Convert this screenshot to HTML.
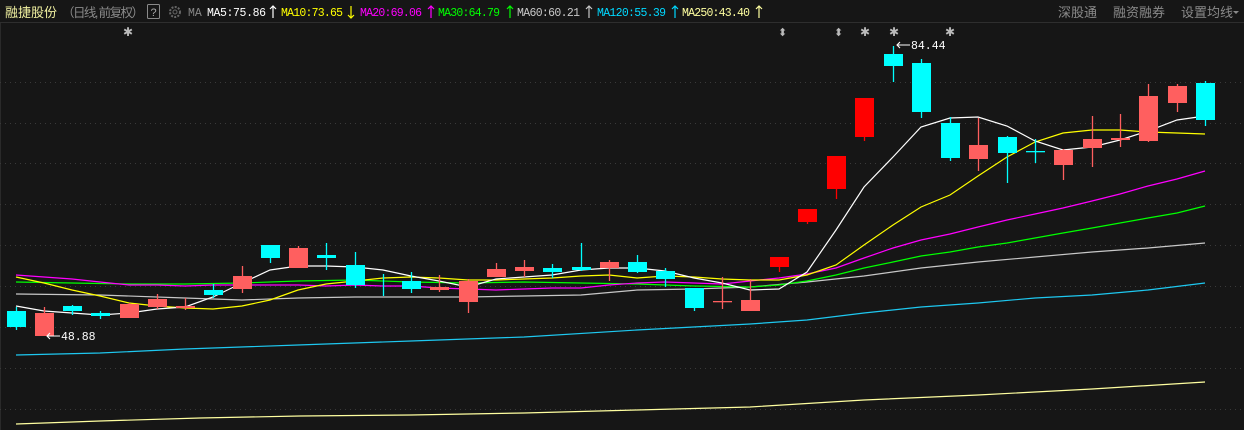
<!DOCTYPE html>
<html><head><meta charset="utf-8"><style>
html,body{margin:0;padding:0;background:#161616;width:1244px;height:430px;overflow:hidden}
svg{display:block}
text{font-family:"Liberation Sans","Noto Sans CJK SC",sans-serif}
.m{font-family:"Liberation Mono","Noto Sans CJK SC",monospace;font-size:11.5px}
</style></head><body>
<svg width="1244" height="430" viewBox="0 0 1244 430" xmlns="http://www.w3.org/2000/svg">
<rect width="1244" height="430" fill="#161616"/>
<line x1="0" y1="22.5" x2="1244" y2="22.5" stroke="#2e2e2e"/>
<line x1="0.5" y1="23" x2="0.5" y2="430" stroke="#2a2a2a"/>
<g stroke="#3a3a3a" stroke-dasharray="1 4">
<line x1="0" y1="82.5" x2="1244" y2="82.5"/><line x1="0" y1="123.5" x2="1244" y2="123.5"/>
<line x1="0" y1="163.5" x2="1244" y2="163.5"/><line x1="0" y1="204.5" x2="1244" y2="204.5"/>
<line x1="0" y1="245.5" x2="1244" y2="245.5"/><line x1="0" y1="286.5" x2="1244" y2="286.5"/>
<line x1="0" y1="327.5" x2="1244" y2="327.5"/><line x1="0" y1="368.5" x2="1244" y2="368.5"/>
<line x1="0" y1="409.5" x2="1244" y2="409.5"/>
</g>
<text x="5" y="17" font-size="13" fill="#f0f0a0" textLength="52">融捷股份</text>
<text x="62" y="17" font-size="12.5" fill="#8a8a8a" textLength="82">（日线, 前复权）</text>
<rect x="147.5" y="4.5" width="12" height="14" fill="none" stroke="#8a8a8a" rx="1"/>
<text x="150.5" y="16" font-size="11" fill="#aaa">?</text>
<circle cx="175" cy="12" r="5" fill="none" stroke="#666" stroke-width="2" stroke-dasharray="2 1.3"/>
<circle cx="175" cy="12" r="2" fill="none" stroke="#666"/>
<text x="188" y="16" class="m" fill="#888">MA</text>
<g class="m">
<text x="207" y="16" class="m" fill="#ffffff" textLength="59">MA5:75.86</text>
<text x="281" y="16" class="m" fill="#ffff00" textLength="62">MA10:73.65</text>
<text x="360" y="16" class="m" fill="#ff00ff" textLength="62">MA20:69.06</text>
<text x="438" y="16" class="m" fill="#00ff00" textLength="62">MA30:64.79</text>
<text x="517" y="16" class="m" fill="#c8c8c8" textLength="63">MA60:60.21</text>
<text x="597" y="16" class="m" fill="#00d8ff" textLength="69">MA120:55.39</text>
<text x="682" y="16" class="m" fill="#ffffa0" textLength="68">MA250:43.40</text>
</g>
<g fill="none" stroke-width="1.2">
<path d="M273 18V6M270 9L273 6L276 9" stroke="#fff"/>
<path d="M351 6V18M348 15L351 18L354 15" stroke="#ffff00"/>
<path d="M431 18V6M428 9L431 6L434 9" stroke="#ff00ff"/>
<path d="M510 18V6M507 9L510 6L513 9" stroke="#00ff00"/>
<path d="M589 18V6M586 9L589 6L592 9" stroke="#c8c8c8"/>
<path d="M675 18V6M672 9L675 6L678 9" stroke="#00d8ff"/>
<path d="M759 18V6M756 9L759 6L762 9" stroke="#ffffa0"/>
</g>
<text x="1058" y="17" font-size="13" fill="#8a8a8a">深股通</text>
<text x="1113" y="17" font-size="13" fill="#8a8a8a">融资融券</text>
<text x="1181" y="17" font-size="13" fill="#8a8a8a">设置均线</text>
<path d="M1233 11 L1239 11 L1236 14 Z" fill="#8a8a8a"/>
<g fill="#bbb" font-size="12">
<text x="123" y="36">✱</text><text x="860" y="36">✱</text><text x="889" y="36">✱</text><text x="945" y="36">✱</text>
<text x="778" y="36" font-size="11">⬍</text><text x="834" y="36" font-size="11">⬍</text>
</g>
<g fill="none" stroke-width="1.2">
<polyline stroke="#ffffa0" points="16,424 100,421 200,418 300,416 411,415 524,413 637,410 750,407 864,400 978,395 1092,389 1205,382"/>
<polyline stroke="#1ec8f0" points="16,355 100,353 185,349 298,345 411,341 524,337 637,330 750,324 807,320 864,313 921,307 978,303 1035,298 1092,295 1148,290 1205,283"/>
<polyline stroke="#c8c8c8" points="16,294 100,295 185,298 242,300 298,298 355,297 411,297 468,297 524,296 581,295 637,290 694,289 750,287 807,282 864,276 921,268 978,262 1035,257 1092,252 1148,248 1205,243"/>
<polyline stroke="#00ff00" points="16,282 72,283 129,284 185,284 242,283 298,281 355,280 411,282 468,283 524,282 581,283 637,284 694,286 750,287 779,285 807,281 836,275 864,268 893,262 921,256 950,252 978,247 1007,243 1035,238 1063,233 1092,228 1120,223 1148,218 1177,213 1205,206"/>
<polyline stroke="#ff00ff" points="16,275 44,277 72,279 100,282 129,285 157,285 185,286 213,285 242,285 270,285 298,285 326,286 355,285 383,286 411,286 439,288 468,289 496,290 524,289 552,288 581,288 609,285 637,283 665,282 694,283 722,284 750,281 779,278 807,274 836,268 864,258 893,248 921,240 950,234 978,227 1007,220 1035,214 1063,208 1092,201 1120,194 1148,186 1177,179 1205,171"/>
<polyline stroke="#ffff00" points="16,277 44,283 72,290 100,296 129,303 157,306 185,308 213,309 242,306 270,300 298,290 326,284 355,281 383,278 411,277 439,278 468,280 496,280 524,279 552,278 581,276 609,275 637,278 665,276 694,277 722,279 750,280 779,280 807,275 836,265 864,245 893,225 921,207 950,195 978,176 1007,157 1035,142 1063,133 1092,130 1120,130 1148,132 1177,133 1205,134"/>
<polyline stroke="#ffffff" points="16,306 44,311 72,313 100,315 129,313 157,309 185,307 213,297 242,283 270,270 298,266 326,266 355,267 383,270 411,276 439,281 468,287 496,279 524,277 552,275 581,270 609,268 637,268 665,271 694,278 722,283 750,290 779,289 807,272 836,230 864,187 893,157 921,127 950,118 978,117 1007,126 1035,141 1063,150 1092,147 1120,140 1148,131 1177,120 1205,116"/>
</g>
<g stroke-width="1.3">
<g fill="#00ffff" stroke="#00ffff">
<line x1="16.5" y1="307" x2="16.5" y2="330"/><rect x="7" y="311" width="19" height="16" stroke="none"/>
<line x1="72.5" y1="305" x2="72.5" y2="315"/><rect x="63" y="306" width="19" height="5" stroke="none"/>
<line x1="100.5" y1="311" x2="100.5" y2="319"/><rect x="91" y="313" width="19" height="3" stroke="none"/>
<line x1="213.5" y1="284" x2="213.5" y2="298"/><rect x="204" y="290" width="19" height="5" stroke="none"/>
<line x1="270.5" y1="245" x2="270.5" y2="263"/><rect x="261" y="245" width="19" height="13" stroke="none"/>
<line x1="326.5" y1="243" x2="326.5" y2="270"/><rect x="317" y="255" width="19" height="3" stroke="none"/>
<line x1="355.5" y1="252" x2="355.5" y2="288"/><rect x="346" y="265" width="19" height="20" stroke="none"/>
<line x1="383.5" y1="274" x2="383.5" y2="296"/>
<line x1="411.5" y1="272" x2="411.5" y2="293"/><rect x="402" y="281" width="19" height="8" stroke="none"/>
<line x1="552.5" y1="264" x2="552.5" y2="278"/><rect x="543" y="268" width="19" height="4" stroke="none"/>
<line x1="581.5" y1="243" x2="581.5" y2="271"/><rect x="572" y="267" width="19" height="3" stroke="none"/>
<line x1="637.5" y1="255" x2="637.5" y2="273"/><rect x="628" y="262" width="19" height="10" stroke="none"/>
<line x1="665.5" y1="268" x2="665.5" y2="287"/><rect x="656" y="271" width="19" height="8" stroke="none"/>
<line x1="694.5" y1="288" x2="694.5" y2="311"/><rect x="685" y="288" width="19" height="20" stroke="none"/>
<line x1="893.5" y1="46" x2="893.5" y2="82"/><rect x="884" y="54" width="19" height="12" stroke="none"/>
<line x1="921.5" y1="59" x2="921.5" y2="118"/><rect x="912" y="63" width="19" height="49" stroke="none"/>
<line x1="950.5" y1="117" x2="950.5" y2="161"/><rect x="941" y="123" width="19" height="35" stroke="none"/>
<line x1="1007.5" y1="136" x2="1007.5" y2="183"/><rect x="998" y="137" width="19" height="16" stroke="none"/>
<line x1="1035.5" y1="139" x2="1035.5" y2="163"/><rect x="1026" y="151" width="19" height="1.3" stroke="none"/>
<line x1="1205.5" y1="81" x2="1205.5" y2="126"/><rect x="1196" y="83" width="19" height="37" stroke="none"/>
</g>
<g fill="#ff5f5f" stroke="#ff5f5f">
<line x1="44.5" y1="307" x2="44.5" y2="336"/><rect x="35" y="313" width="19" height="23" stroke="none"/>
<line x1="129.5" y1="303" x2="129.5" y2="318"/><rect x="120" y="304" width="19" height="14" stroke="none"/>
<line x1="157.5" y1="294" x2="157.5" y2="309"/><rect x="148" y="299" width="19" height="8" stroke="none"/>
<line x1="185.5" y1="298" x2="185.5" y2="310"/><rect x="176" y="306" width="19" height="2" stroke="none"/>
<line x1="242.5" y1="266" x2="242.5" y2="293"/><rect x="233" y="276" width="19" height="13" stroke="none"/>
<line x1="298.5" y1="246" x2="298.5" y2="268"/><rect x="289" y="248" width="19" height="20" stroke="none"/>
<line x1="439.5" y1="275" x2="439.5" y2="292"/><rect x="430" y="287" width="19" height="3" stroke="none"/>
<line x1="468.5" y1="279" x2="468.5" y2="313"/><rect x="459" y="281" width="19" height="21" stroke="none"/>
<line x1="496.5" y1="263" x2="496.5" y2="277"/><rect x="487" y="269" width="19" height="8" stroke="none"/>
<line x1="524.5" y1="260" x2="524.5" y2="277"/><rect x="515" y="267" width="19" height="4" stroke="none"/>
<line x1="609.5" y1="260" x2="609.5" y2="281"/><rect x="600" y="262" width="19" height="6" stroke="none"/>
<line x1="722.5" y1="277" x2="722.5" y2="309"/><rect x="713" y="301" width="19" height="1.3" stroke="none"/>
<line x1="750.5" y1="279" x2="750.5" y2="311"/><rect x="741" y="300" width="19" height="11" stroke="none"/>
<line x1="978.5" y1="118" x2="978.5" y2="171"/><rect x="969" y="145" width="19" height="14" stroke="none"/>
<line x1="1063.5" y1="149" x2="1063.5" y2="180"/><rect x="1054" y="150" width="19" height="15" stroke="none"/>
<line x1="1092.5" y1="116" x2="1092.5" y2="167"/><rect x="1083" y="139" width="19" height="9" stroke="none"/>
<line x1="1120.5" y1="114" x2="1120.5" y2="147"/><rect x="1111" y="138" width="19" height="2" stroke="none"/>
<line x1="1148.5" y1="84" x2="1148.5" y2="142"/><rect x="1139" y="96" width="19" height="45" stroke="none"/>
<line x1="1177.5" y1="84" x2="1177.5" y2="112"/><rect x="1168" y="86" width="19" height="17" stroke="none"/>
</g>
<g fill="#ff0000" stroke="#ff0000">
<line x1="779.5" y1="257" x2="779.5" y2="272"/><rect x="770" y="257" width="19" height="10" stroke="none"/>
<line x1="807.5" y1="209" x2="807.5" y2="224"/><rect x="798" y="209" width="19" height="13" stroke="none"/>
<line x1="836.5" y1="156" x2="836.5" y2="199"/><rect x="827" y="156" width="19" height="33" stroke="none"/>
<line x1="864.5" y1="98" x2="864.5" y2="141"/><rect x="855" y="98" width="19" height="39" stroke="none"/>
</g>
</g>
<g fill="none" stroke="#fff" stroke-width="1.1">
<path d="M47 336H60M50 333L47 336L50 339"/>
<path d="M897 45H910M900 42L897 45L900 48"/>
</g>
<text x="61" y="340" class="m" fill="#fff">48.88</text>
<text x="911" y="49" class="m" fill="#fff">84.44</text>
</svg>
</body></html>
